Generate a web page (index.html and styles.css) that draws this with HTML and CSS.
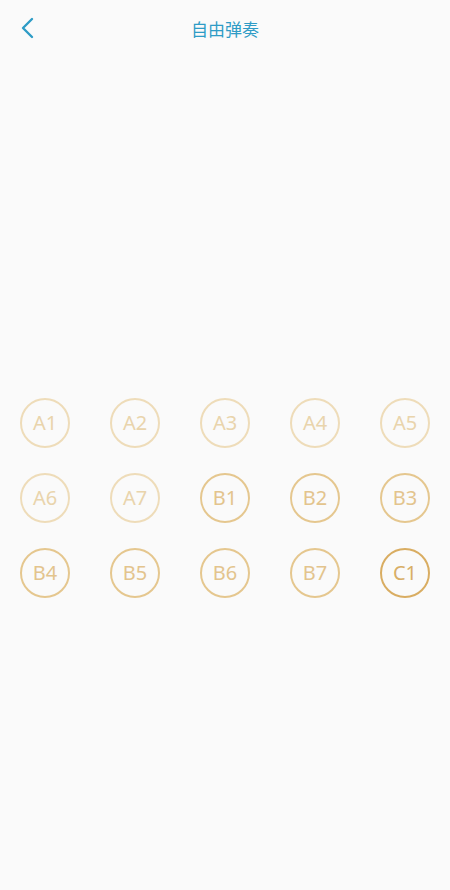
FILE: index.html
```html
<!DOCTYPE html>
<html lang="zh">

<head>
    <meta charset="UTF-8">
    <meta name="viewport" content="width=device-width, initial-scale=1.0">
    <title>自由弹奏</title>
    <link rel="stylesheet" href="styles.css">
</head>

<body>
    <header class="topbar">
        <span class="back">
            <svg width="14" height="22" viewBox="0 0 14 22">
                <path d="M12 2 L3 11 L12 20" fill="none" stroke="#2e9cc6" stroke-width="2.4" stroke-linecap="round" stroke-linejoin="round" />
            </svg>
        </span>
        <h1 class="title">自由弹奏</h1>
    </header>

    <main class="keys">
        <div class="key key-a">A1</div>
        <div class="key key-a">A2</div>
        <div class="key key-a">A3</div>
        <div class="key key-a">A4</div>
        <div class="key key-a">A5</div>
        <div class="key key-a">A6</div>
        <div class="key key-a">A7</div>
        <div class="key key-b">B1</div>
        <div class="key key-b">B2</div>
        <div class="key key-b">B3</div>
        <div class="key key-b">B4</div>
        <div class="key key-b">B5</div>
        <div class="key key-b">B6</div>
        <div class="key key-b">B7</div>
        <div class="key key-c">C1</div>
    </main>
</body>

</html>
```

FILE: styles.css
```css
* {
    padding: 0;
    margin: 0;
    box-sizing: border-box;
}

body {
    background-color: #fafafa;
    font-family: "Noto Sans", "Noto Sans CJK SC", sans-serif;
    height: 890px;
}

.topbar {
    height: 56px;
    display: flex;
    align-items: center;
    justify-content: center;
    position: relative;
}

.back {
    position: absolute;
    left: 20px;
    top: 17px;
    display: flex;
}

.title {
    font-size: 17px;
    font-weight: normal;
    color: #2e9cc6;
    font-family: "Noto Sans CJK SC", sans-serif;
}

.keys {
    margin-top: 342px;
    display: grid;
    grid-template-columns: repeat(5, 90px);
    row-gap: 25px;
    justify-items: center;
}

.key {
    width: 50px;
    height: 50px;
    border-radius: 50%;
    border: 2px solid;
    display: flex;
    align-items: center;
    justify-content: center;
    font-size: 20px;
    padding-bottom: 1px;
}

.key-a {
    border-color: #eedcb9;
    color: #e9d4ac;
}

.key-b {
    border-color: #e5c78f;
    color: #e3c48d;
}

.key-c {
    border-color: #d9ad62;
    color: #d8ae66;
}
```
